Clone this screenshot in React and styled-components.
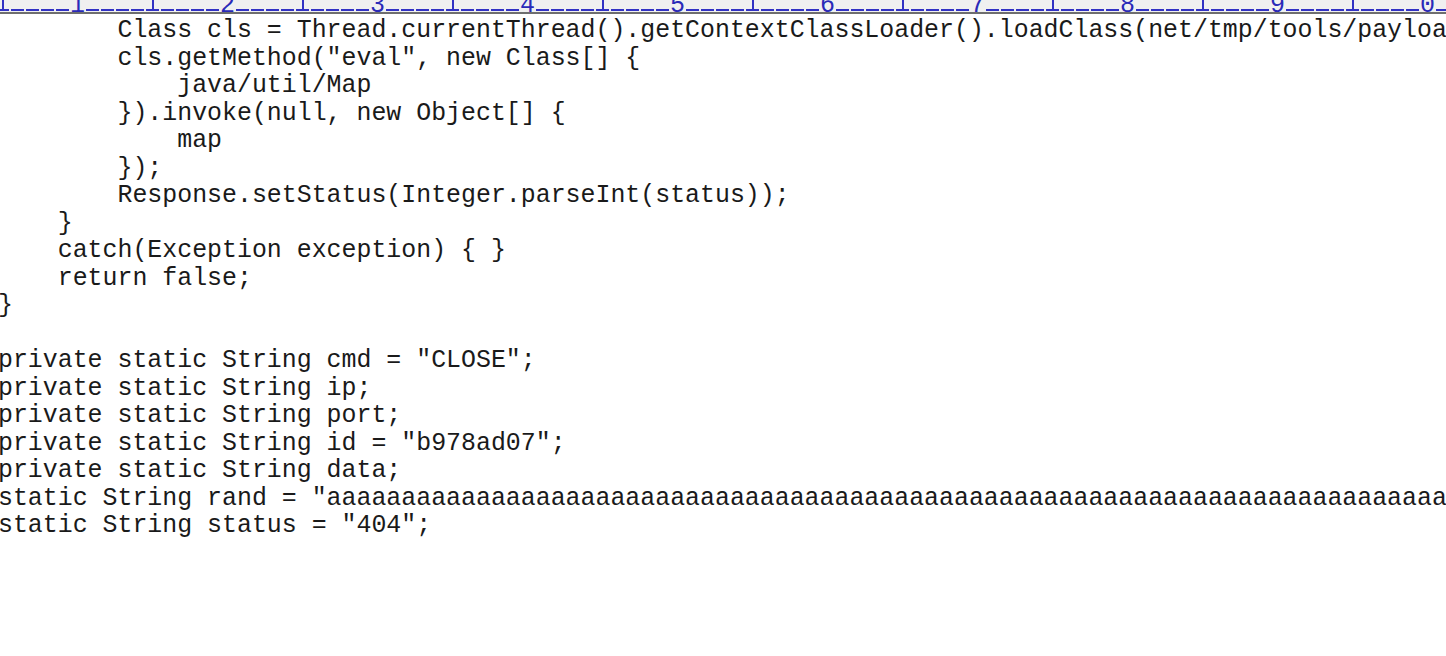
import styled, { createGlobalStyle } from 'styled-components';

const GlobalStyle = createGlobalStyle`
  html, body {
    margin: 0;
    padding: 0;
    background: #ffffff;
    overflow: hidden;
  }
`;

const Editor = styled.div`
  width: 1446px;
  height: 656px;
  overflow: hidden;
  background: #ffffff;
`;

const Ruler = styled.div`
  display: flex;
  height: 12px;
  overflow: hidden;
  background: #f0f0f0;
  border-bottom: 2px solid #6e6e6e;
`;

const RulerTrack = styled.div`
  display: flex;
  margin-left: -65px;
  flex-shrink: 0;
`;

const blue = '#3232c4';

const Tick = styled.div`
  flex: 0 0 15px;
  width: 15px;
  height: 12px;
  display: flex;
  justify-content: center;
  align-items: flex-end;
  background: ${({ $kind }) =>
    $kind === 'plus'
      ? `linear-gradient(${blue}, ${blue}) 50% 0 / 2px 11px no-repeat,
         linear-gradient(${blue}, ${blue}) 1px 9px / 13px 2px no-repeat`
      : $kind === 'dash'
      ? `linear-gradient(${blue}, ${blue}) 1px 9px / 13px 2px no-repeat`
      : 'none'};
`;

const Digit = styled.span`
  font-family: "Liberation Mono", "Courier New", monospace;
  font-size: 25px;
  line-height: 25px;
  color: #2a2ab8;
  margin-bottom: -6px;
`;

const Code = styled.div`
  padding-top: 3px;
  margin-left: -2px;
  font-family: "Liberation Mono", "Courier New", monospace;
  font-size: 24.9px;
  color: #1a1a1a;
`;

const Line = styled.div`
  height: 27.5px;
  line-height: 27.5px;
  white-space: pre;
`;

const rulerCells = Array.from({ length: 104 }, (_, i) => {
  const col = i + 1;
  if (col % 10 === 0) return { kind: 'digit', text: String((col / 10) % 10) };
  if (col % 5 === 0) return { kind: 'plus' };
  return { kind: 'dash' };
});

const codeLines = [
  '        Class cls = Thread.currentThread().getContextClassLoader().loadClass(net/tmp/tools/payloads/Eval);',
  '        cls.getMethod("eval", new Class[] {',
  '            java/util/Map',
  '        }).invoke(null, new Object[] {',
  '            map',
  '        });',
  '        Response.setStatus(Integer.parseInt(status));',
  '    }',
  '    catch(Exception exception) { }',
  '    return false;',
  '}',
  '',
  'private static String cmd = "CLOSE";',
  'private static String ip;',
  'private static String port;',
  'private static String id = "b978ad07";',
  'private static String data;',
  'static String rand = "' + 'a'.repeat(120) + '";',
  'static String status = "404";',
];

export default function App() {
  return (
    <>
      <GlobalStyle />
      <Editor>
        <Ruler>
          <RulerTrack>
            {rulerCells.map((c, i) => (
              <Tick key={i} $kind={c.kind}>
                {c.kind === 'digit' && <Digit>{c.text}</Digit>}
              </Tick>
            ))}
          </RulerTrack>
        </Ruler>
        <Code>
          {codeLines.map((l, i) => (
            <Line key={i}>{l}</Line>
          ))}
        </Code>
      </Editor>
    </>
  );
}
